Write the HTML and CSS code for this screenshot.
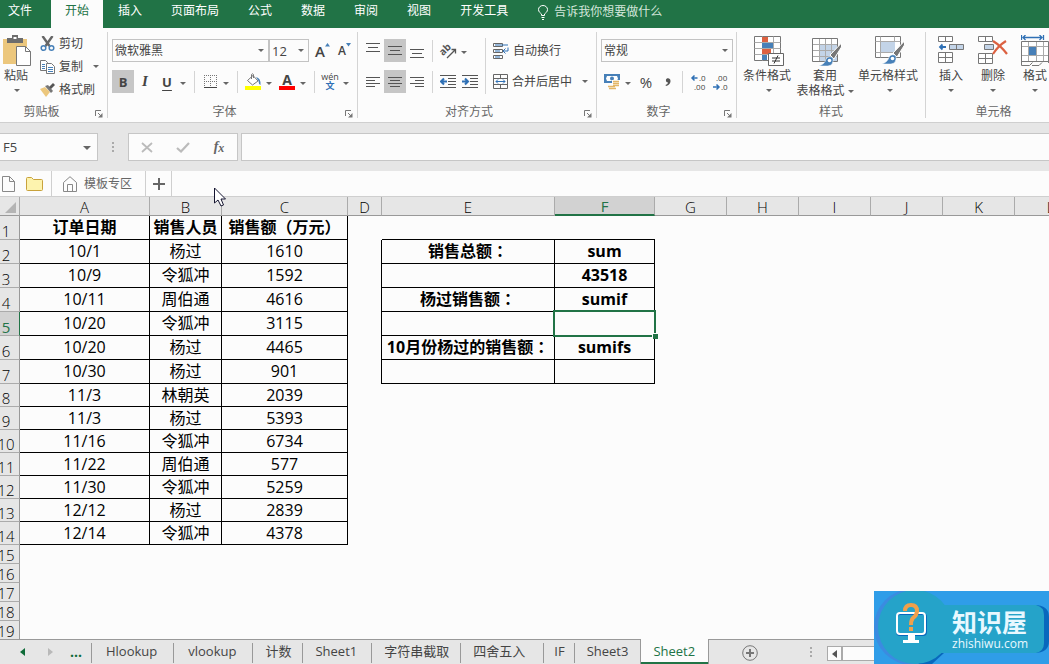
FILE: index.html
```html
<!DOCTYPE html>
<html lang="zh-CN">
<head>
<meta charset="utf-8">
<title>Sheet2</title>
<link rel="stylesheet" href="styles.css">
</head>
<body>
<nav class="menu">
  <button class="menu-tab file">文件</button>
  <button class="menu-tab active">开始</button>
  <button class="menu-tab">插入</button>
  <button class="menu-tab">页面布局</button>
  <button class="menu-tab">公式</button>
  <button class="menu-tab">数据</button>
  <button class="menu-tab">审阅</button>
  <button class="menu-tab">视图</button>
  <button class="menu-tab">开发工具</button>
  <button class="tell">
    <svg width="10" height="15" viewBox="0 0 10 15" fill="none" stroke="#fff"><path d="M3.5 10.5V9C2.500 8 .5 7 .5 4.500a4.500 4 0 0 1 9 0C9.500 7 7.500 8 6.500 9v1.500zM3.500 12.500h3M4 14.500h2"/></svg>
    <span>告诉我你想要做什么</span>
  </button>
</nav>

<section class="ribbon">
  <div class="group clipboard">
    <div class="group-body">
      <button class="big paste">
        <svg width="30" height="32" viewBox="0 0 30 32"><path d="M1 4h24v25H1z" fill="#ecc77d"/><path d="M5 3h5V0h6v3h5v5H5z" fill="#6d6d6d"/><path d="M11.500 2h3v2h-3z" fill="#fff"/><path d="M14.500 11.500h9l5 5v14h-14z" fill="#fff" stroke="#777"/><path d="M23.500 11.500v5h5" fill="none" stroke="#777"/></svg>
        <span>粘贴</span><i class="caret"></i>
      </button>
      <div class="clip-list">
        <button class="line"><svg width="14" height="16" viewBox="0 0 14 16" fill="none"><path d="M2 0l7 10M12 0L5 10" stroke="#666" stroke-width="2.400"/><circle cx="3" cy="12" r="2.300" stroke="#4780b8" stroke-width="1.500"/><circle cx="11" cy="12" r="2.300" stroke="#4780b8" stroke-width="1.500"/></svg><span>剪切</span></button>
        <button class="line"><svg width="15" height="14" viewBox="0 0 15 14"><path d="M.5.5h5l2 2v8h-7z" fill="#fff" stroke="#777"/><path d="M2 4.500h3M2 6.500h3M2 8.500h3" stroke="#4780b8"/><path d="M6.500 3.500h5l3 3v7h-8z" fill="#fff" stroke="#777"/><path d="M8 7.500h5M8 9.500h5M8 11.500h5" stroke="#4780b8"/></svg><span>复制</span><i class="caret"></i></button>
        <button class="line"><svg width="15" height="14" viewBox="0 0 15 14"><path d="M0 6l5-2 5 5-4 5z" fill="#ecc77d"/><path d="M5 3l3-1 5 6-2 2z" fill="#777"/><path d="M9 4l4-4 2 2-4 4z" fill="#555"/></svg><span>格式刷</span></button>
      </div>
    </div>
    <div class="group-label">剪贴板<button class="launcher" aria-label="剪贴板"><svg width="8" height="8" viewBox="0 0 8 8"><path d="M.5 6V.5H6M3 3l3.500 3.500" fill="none" stroke="#777"/><path d="M7.500 3v4.500H3z" fill="#777"/></svg></button></div>
  </div>

  <div class="group font">
    <div class="group-body rows">
      <div class="row">
        <label class="combo family"><select aria-label="字体"><option>微软雅黑</option></select><i class="caret"></i></label>
        <label class="combo size"><select aria-label="字号"><option>12</option></select><i class="caret"></i></label>
        <button class="grow" aria-label="增大字号"><span>A</span><svg width="5" height="4" viewBox="0 0 5 4"><path d="M0 3.500L2.500 0 5 3.500z" fill="#4780b8"/></svg></button>
        <button class="grow shrink" aria-label="减小字号"><span>A</span><svg width="5" height="4" viewBox="0 0 5 4"><path d="M0 0h5L2.500 3.500z" fill="#4780b8"/></svg></button>
      </div>
      <div class="row">
        <button class="tool on bold">B</button><button class="tool italic">I</button><button class="tool under">U</button><button class="drop" aria-label="下划线"><i class="caret"></i></button>
        <i class="sep"></i>
        <button class="tool" aria-label="边框"><svg width="13" height="14" viewBox="0 0 13 14" fill="none" stroke="#777"><path d="M.5 0v12M6.500 0v12M12.500 0v12M0 .5h13M0 6.500h13" stroke-dasharray="1 1"/><path d="M0 12.500h13" stroke="#444" /></svg></button><button class="drop" aria-label="边框选项"><i class="caret"></i></button>
        <i class="sep"></i>
        <button class="tool" aria-label="填充颜色"><svg width="16" height="17" viewBox="0 0 16 17"><path d="M2.500 7.500L8 2.500l5 5.500-5.500 4z" fill="#fff" stroke="#777"/><path d="M6.500 6V1.500Q7.500 0 8.500 1.500V5" fill="none" stroke="#777"/><path d="M11 4q5 1 4.500 8-2-1-2-4z" fill="#4780b8"/><path d="M0 13h16v4H0z" fill="#ff0"/></svg></button><button class="drop" aria-label="填充选项"><i class="caret"></i></button>
        <button class="tool ink" aria-label="字体颜色"><span>A</span></button><button class="drop" aria-label="颜色选项"><i class="caret"></i></button>
        <i class="sep"></i>
        <button class="tool phonetic"><span>wén</span><b>文</b></button><button class="drop" aria-label="拼音选项"><i class="caret"></i></button>
      </div>
    </div>
    <div class="group-label">字体<button class="launcher" aria-label="字体设置"><svg width="8" height="8" viewBox="0 0 8 8"><path d="M.5 6V.5H6M3 3l3.500 3.500" fill="none" stroke="#777"/><path d="M7.500 3v4.500H3z" fill="#777"/></svg></button></div>
  </div>

  <div class="group align">
    <div class="group-body">
      <div class="rows">
        <div class="row">
          <button class="tool" aria-label="顶端对齐"><svg width="14" height="16" viewBox="0 0 14 16" stroke="#555"><path d="M0 .5h14M2 4.500h10M0 8.500h14"/></svg></button><button class="tool on" aria-label="垂直居中"><svg width="14" height="14" viewBox="0 0 14 14" stroke="#555"><path d="M0 2.500h14M2 6.500h10M0 10.500h14"/></svg></button><button class="tool" aria-label="底端对齐"><svg width="14" height="14" viewBox="0 0 14 14" stroke="#555"><path d="M0 5.500h14M2 9.500h10M0 13.500h14"/></svg></button>
          <i class="sep"></i>
          <button class="tool" aria-label="方向"><svg width="18" height="18" viewBox="0 0 18 18"><text x="0" y="11" class="ab" transform="rotate(-45 6 8)">ab</text><path d="M8 16L16 8M12.500 7.500h4v4" fill="none" stroke="#555" stroke-width="1.300"/></svg></button><button class="drop" aria-label="方向选项"><i class="caret"></i></button>
        </div>
        <div class="row">
          <button class="tool" aria-label="左对齐"><svg width="14" height="12" viewBox="0 0 14 12" stroke="#555"><path d="M0 1.500h14M0 4.500h9M0 7.500h14M0 10.500h9"/></svg></button><button class="tool on" aria-label="居中"><svg width="14" height="12" viewBox="0 0 14 12" stroke="#555"><path d="M0 1.500h14M2 4.500h10M0 7.500h14M2 10.500h10"/></svg></button><button class="tool" aria-label="右对齐"><svg width="14" height="12" viewBox="0 0 14 12" stroke="#555"><path d="M0 1.500h14M5 4.500h9M0 7.500h14M5 10.500h9"/></svg></button>
          <i class="sep"></i>
          <button class="tool" aria-label="减少缩进"><svg width="16" height="14" viewBox="0 0 16 14"><path d="M0 .5h16M8 3.500h8M8 6.500h8M8 9.500h8M0 12.500h16" stroke="#555"/><path d="M7 6.500H2M4 3.500l-3 3 3 3" fill="none" stroke="#2f70b5" stroke-width="2"/></svg></button><button class="tool" aria-label="增加缩进"><svg width="16" height="14" viewBox="0 0 16 14"><path d="M0 .5h16M8 3.500h8M8 6.500h8M8 9.500h8M0 12.500h16" stroke="#555"/><path d="M0 6.500h5M3 3.500l3 3-3 3" fill="none" stroke="#2f70b5" stroke-width="2"/></svg></button>
        </div>
      </div>
      <i class="sep tall"></i>
      <div class="rows">
        <button class="row wrap"><svg width="16" height="16" viewBox="0 0 16 16" fill="none"><path d="M.5.5h9v3h-9zM.5 6.500h9v3h-9zM.5 15.500v-3h9v3z" stroke="#666"/><path d="M2 2h13M2 8h5M2 14h5M15 4.500v3.500h-5M12.500 5.500L10 8l2.500 2.500" stroke="#2f70b5"/></svg><span>自动换行</span></button>
        <button class="row wrap"><svg width="15" height="15" viewBox="0 0 15 15" fill="none"><path d="M.5.5h14v14H.5zM.5 4.500h14M.5 10.500h14M7.500.5v4M7.500 10.500v4" stroke="#666"/><path d="M3 7.500h9M5 5.500l-2 2 2 2M10 5.500l2 2-2 2" stroke="#2f70b5"/></svg><span>合并后居中</span><i class="caret"></i></button>
      </div>
    </div>
    <div class="group-label">对齐方式<button class="launcher" aria-label="对齐设置"><svg width="8" height="8" viewBox="0 0 8 8"><path d="M.5 6V.5H6M3 3l3.500 3.500" fill="none" stroke="#777"/><path d="M7.500 3v4.500H3z" fill="#777"/></svg></button></div>
  </div>

  <div class="group number">
    <div class="group-body rows">
      <div class="row"><label class="combo format"><select aria-label="数字格式"><option>常规</option></select><i class="caret"></i></label></div>
      <div class="row">
        <button class="tool" aria-label="会计格式"><svg width="16" height="16" viewBox="0 0 16 16"><path d="M0 0h16v9H0z" fill="#4780b8"/><path d="M3 2h10l1 2.500L13 7H3L2 4.500z" fill="#fff"/><circle cx="8" cy="4.500" r="2" fill="#4780b8"/><path d="M8 6h8v10H8z" fill="#fff"/><path d="M9 7.500h6M9 9.500h6M9 11.500h6M4 12.500h7M5 14.500h7" stroke="#e3b768" stroke-width="1.500"/></svg></button><button class="drop" aria-label="会计选项"><i class="caret"></i></button>
        <button class="tool percent">%</button>
        <button class="tool" aria-label="千位分隔"><svg width="6" height="8" viewBox="0 0 6 8"><path d="M1 1.500C2-.5 5.500-.2 5.500 3S3 7.500 1 8l-.5-1Q3 6 3 4.500Q.5 4.500 1 1.500z" fill="#555"/></svg></button>
        <i class="sep"></i>
        <button class="tool decimal" aria-label="增加小数位"><svg width="18" height="20" viewBox="0 0 18 20"><path d="M7.500 6H2.500M4.500 3.500L2 6l2.500 2.500" fill="none" stroke="#2f70b5" stroke-width="1.500"/><text x="9" y="9">.0</text><text x="4" y="18">.00</text></svg></button><button class="tool decimal" aria-label="减少小数位"><svg width="18" height="20" viewBox="0 0 18 20"><text x="4" y="9">.00</text><path d="M1 15h6M4.500 12.500L7 15l-2.500 2.500" fill="none" stroke="#2f70b5" stroke-width="1.500"/><text x="9" y="18">.0</text></svg></button>
      </div>
    </div>
    <div class="group-label">数字<button class="launcher" aria-label="数字设置"><svg width="8" height="8" viewBox="0 0 8 8"><path d="M.5 6V.5H6M3 3l3.500 3.500" fill="none" stroke="#777"/><path d="M7.500 3v4.500H3z" fill="#777"/></svg></button></div>
  </div>

  <div class="group styles">
    <div class="group-body">
      <button class="big cond"><svg width="30" height="32" viewBox="0 0 30 32"><path d="M.5 1.500h26v24H.5z" fill="#fff" stroke="#777"/><path d="M.5 7.500h26M.5 13.500h26M.5 19.500h26M8.500 1.500v24M19.500 1.500v24" stroke="#aaa"/><path d="M8 2h6v5H8zM8 14h9v5H8z" fill="#dc6141"/><path d="M8 8h11v5H8zM8 20h5v5H8z" fill="#4780b8"/><path d="M14.500 18.500h15v12h-15z" fill="#fff" stroke="#666"/><path d="M18 23h8M18 26h8M24 20.500l-4 8" stroke="#333"/></svg><span>条件格式</span><i class="caret"></i></button>
      <button class="big tablefmt"><svg width="30" height="32" viewBox="0 0 30 32"><path d="M.5 3.500h25v23H.5z" fill="#fff"/><path d="M7 10h18v16H7z" fill="#c3d4e8"/><path d="M.5 9.500h25M.5 15.500h25M.5 21.500h25M7.500 3.500v23M13.500 3.500v23M19.500 3.500v23" stroke="#aaa"/><path d="M.5 3.500h25v23H.5z" fill="none" stroke="#777"/><path d="M29.500 8L18 20l4 4 7.500-12z" fill="#777" stroke="#fff"/><path d="M7 31q6-2 7-7 3-4 7-1 1 7-5 8z" fill="#4780b8" stroke="#fff" stroke-width=".5"/><circle cx="17.500" cy="25.500" r="1.800" fill="#fff"/></svg><span>套用<br>表格格式 <i class="caret"></i></span></button>
      <button class="big cellstyle"><svg width="30" height="32" viewBox="0 0 30 32"><path d="M.5 1.500h25v21H.5z" fill="#fff" stroke="#777"/><path d="M.5 6.500h25M.5 17.500h25M5.500 1.500v21M19.500 1.500v21" stroke="#aaa"/><path d="M6 7h14v10H6z" fill="#c3d4e8"/><path d="M29.500 6L18 18l4 4 7.500-12z" fill="#777" stroke="#fff"/><path d="M7 29q6-2 7-7 3-4 7-1 1 7-5 8z" fill="#4780b8" stroke="#fff" stroke-width=".5"/><circle cx="17.500" cy="23.500" r="1.800" fill="#fff"/></svg><span>单元格样式</span><i class="caret"></i></button>
    </div>
    <div class="group-label">样式</div>
  </div>

  <div class="group cells">
    <div class="group-body">
      <button class="big"><svg width="28" height="32" viewBox="0 0 28 32"><path d="M1.500 1.500h14v5h-14zM8.500 1.500v5M1.500 17.500h14v10h-14zM8.500 17.500v10M1.500 22.500h14" fill="#fff" stroke="#777"/><path d="M12.500 9.500h14v5h-14z" fill="#c3d4e8" stroke="#777"/><path d="M19.500 9.500v5" stroke="#777"/><path d="M9 12H3M5.500 9.500L3 12l2.500 2.500" fill="none" stroke="#2f70b5" stroke-width="1.800"/></svg><span>插入</span><i class="caret"></i></button>
      <button class="big"><svg width="30" height="32" viewBox="0 0 30 32"><path d="M.5 1.500h14v5H.5zM7.500 1.500v5M.5 18.500h14v10H.5zM7.500 18.500v10M.5 23.500h14" fill="#fff" stroke="#777"/><path d="M6.500 9.500h9v5h-9z" fill="#c3d4e8" stroke="#777"/><path d="M15 6q8 5 14 13M28 6q-8 5-13 13" fill="none" stroke="#dc6141" stroke-width="2.200"/></svg><span>删除</span><i class="caret"></i></button>
      <button class="big"><svg width="28" height="32" viewBox="0 0 28 32"><path d="M.5 0v5M22.500 0v5M2 2.500h19M4.500 0L2 2.500 4.500 5M18.500 0L21 2.500 18.500 5" fill="none" stroke="#2f70b5" stroke-width="1.300"/><path d="M.5 6.500h27v20H.5z" fill="#fff"/><path d="M.5 11.500h27M.5 20.500h27M7.500 6.500v20M15.500 6.500v20M22.500 6.500v20" stroke="#aaa"/><path d="M.5 6.500h27v20H.5z" fill="none" stroke="#777"/><path d="M8 12h7v8H8z" fill="#4780b8"/><path d="M.5 26v4.500h8l3-3M11 30.500h7l3-3M27.500 26v2" fill="none" stroke="#777"/></svg><span>格式</span><i class="caret"></i></button>
    </div>
    <div class="group-label">单元格</div>
  </div>
</section>

<section class="formula">
  <div class="name-box"><input type="text" value="F5" aria-label="名称框"><button aria-label="名称列表"><i class="caret"></i></button></div>
  <i class="dots"></i>
  <div class="formula-tools">
    <button aria-label="取消"><svg width="12" height="11" viewBox="0 0 12 11"><path d="M1 1l10 9M11 1L1 10" stroke="#bbb" stroke-width="1.800"/></svg></button>
    <button aria-label="输入"><svg width="14" height="11" viewBox="0 0 14 11"><path d="M1 6l4 3.500L13 1" fill="none" stroke="#bbb" stroke-width="2.200"/></svg></button>
    <button class="fx">f<small>x</small></button>
  </div>
  <input class="formula-input" type="text" aria-label="编辑栏">
</section>

<nav class="docs">
  <button class="doc new" aria-label="新建"><svg width="13" height="16" viewBox="0 0 13 16" fill="none" stroke="#888"><path d="M.5.5h7l5 5v10H.5zM7.500.5v5h5"/></svg></button>
  <button class="doc open" aria-label="打开"><svg width="17" height="14" viewBox="0 0 17 14"><path d="M.5 1.500Q.5.5 1.500.5h4l2 2h8q1 0 1 1v9q0 1-1 1h-14q-1 0-1-1z" fill="#fdf3ae" stroke="#c8a23c"/></svg></button>
  <button class="doc home"><svg width="14" height="16" viewBox="0 0 14 16" fill="none" stroke="#888"><path d="M.5 15.500v-9L7 .7l6.500 5.800v9zM4.500 15.500v-7h5v7"/></svg><span>模板专区</span></button>
  <button class="doc add" aria-label="新标签"><svg width="12" height="12" viewBox="0 0 12 12"><path d="M6 0v12M0 6h12" stroke="#666" stroke-width="2"/></svg></button>
</nav>

<main class="sheet">
  <table>
    <colgroup><col class="c-head"><col class="c-a"><col class="c-b"><col class="c-c"><col class="c-d"><col class="c-e"><col class="c-f"><col class="c-n"><col class="c-n"><col class="c-n"><col class="c-n"><col class="c-n"><col class="c-n"></colgroup>
    <thead><tr><th class="corner"><svg width="11" height="11" viewBox="0 0 11 11"><path d="M11 0v11H0z" fill="#b4b4b4"/></svg></th><th>A</th><th>B</th><th>C</th><th>D</th><th>E</th><th class="current">F</th><th>G</th><th>H</th><th>I</th><th>J</th><th>K</th><th>L</th></tr></thead>
    <tbody class="tall-rows">
      <tr class="titles"><th>1</th><td class="box">订单日期</td><td class="box">销售人员</td><td class="box">销售额<span class="punct" lang="zh-TW">（</span>万元<span class="punct" lang="zh-TW">）</span></td><td></td><td class="under-line"></td><td class="under-line"></td><td colspan="6"></td></tr>
      <tr><th>2</th><td class="box">10/1</td><td class="box">杨过</td><td class="box">1610</td><td class="edge"></td><td class="box strong">销售总额<span class="punct" lang="zh-TW">：</span></td><td class="box strong">sum</td><td colspan="6"></td></tr>
      <tr><th>3</th><td class="box">10/9</td><td class="box">令狐冲</td><td class="box">1592</td><td class="edge"></td><td class="box"></td><td class="box strong">43518</td><td colspan="6"></td></tr>
      <tr><th>4</th><td class="box">10/11</td><td class="box">周伯通</td><td class="box">4616</td><td class="edge"></td><td class="box strong">杨过销售额<span class="punct" lang="zh-TW">：</span></td><td class="box strong">sumif</td><td colspan="6"></td></tr>
      <tr><th class="current">5</th><td class="box">10/20</td><td class="box">令狐冲</td><td class="box">3115</td><td class="edge"></td><td class="box"></td><td class="box selected"><i class="handle"></i></td><td colspan="6"></td></tr>
      <tr><th>6</th><td class="box">10/20</td><td class="box">杨过</td><td class="box">4465</td><td class="edge"></td><td class="box strong">10月份杨过的销售额<span class="punct" lang="zh-TW">：</span></td><td class="box strong">sumifs</td><td colspan="6"></td></tr>
      <tr><th>7</th><td class="box">10/30</td><td class="box">杨过</td><td class="box">901</td><td class="edge"></td><td class="box"></td><td class="box"></td><td colspan="6"></td></tr>
    </tbody>
    <tbody class="mid-rows">
      <tr><th>8</th><td class="box">11/3</td><td class="box">林朝英</td><td class="box">2039</td><td colspan="9"></td></tr>
      <tr><th>9</th><td class="box">11/3</td><td class="box">杨过</td><td class="box">5393</td><td colspan="9"></td></tr>
      <tr><th>10</th><td class="box">11/16</td><td class="box">令狐冲</td><td class="box">6734</td><td colspan="9"></td></tr>
      <tr><th>11</th><td class="box">11/22</td><td class="box">周伯通</td><td class="box">577</td><td colspan="9"></td></tr>
      <tr><th>12</th><td class="box">11/30</td><td class="box">令狐冲</td><td class="box">5259</td><td colspan="9"></td></tr>
      <tr><th>13</th><td class="box">12/12</td><td class="box">杨过</td><td class="box">2839</td><td colspan="9"></td></tr>
      <tr><th>14</th><td class="box">12/14</td><td class="box">令狐冲</td><td class="box">4378</td><td colspan="9"></td></tr>
    </tbody>
    <tbody class="short-rows">
      <tr><th>15</th><td colspan="12"></td></tr>
      <tr><th>16</th><td colspan="12"></td></tr>
      <tr><th>17</th><td colspan="12"></td></tr>
      <tr><th>18</th><td colspan="12"></td></tr>
      <tr><th>19</th><td colspan="12"></td></tr>
    </tbody>
  </table>
</main>

<footer class="sheets">
  <div class="sheet-nav">
    <button aria-label="上一个"><svg width="5" height="8" viewBox="0 0 5 8"><path d="M5 0v8L0 4z" fill="#0e6b38"/></svg></button>
    <button aria-label="下一个"><svg width="5" height="8" viewBox="0 0 5 8"><path d="M0 0v8l5-4z" fill="#b9b9b9"/></svg></button>
    <button class="more">...</button>
  </div>
  <button class="sheet-tab wide">Hlookup</button>
  <button class="sheet-tab wide">vlookup</button>
  <button class="sheet-tab">计数</button>
  <button class="sheet-tab medium">Sheet1</button>
  <button class="sheet-tab">字符串截取</button>
  <button class="sheet-tab roomy">四舍五入</button>
  <button class="sheet-tab narrow">IF</button>
  <button class="sheet-tab last">Sheet3</button>
  <button class="sheet-tab active">Sheet2</button>
  <div class="sheet-end">
    <button class="add-sheet" aria-label="新工作表"><svg width="16" height="16" viewBox="0 0 16 16" fill="none" stroke="#777"><circle cx="8" cy="8" r="7.300"/><path d="M8 4v8M4 8h8" stroke-width="2"/></svg></button>
    <i class="dots"></i>
    <button class="scroll-left" aria-label="向左滚动"><svg width="5" height="8" viewBox="0 0 5 8"><path d="M5 0v8L0 4z" fill="#555"/></svg></button>
    <div class="track"></div>
  </div>
</footer>

<aside class="brand">
  <svg class="brand-art" width="175" height="73" viewBox="0 0 175 73">
    <path d="M0 0h175v73H0z" fill="#2f9de8"/>
    <circle cx="38" cy="36" r="38" fill="#3b8be0"/>
    <path d="M38 0q20 1 32 14l-5 4-27-14zM70 62L58 73H44l14-11zM160 14q15 0 15 12v24q0 12-15 12z" fill="#0868bd"/>
    <circle cx="41" cy="36" r="37" fill="#25a3c9"/>
    <path d="M50 14h112q8 2 8 10v28q0 8-8 10H50z" fill="#25a3c9"/>
    <rect x="23" y="23" width="29" height="21" rx="3" fill="none" stroke="#0868bd" stroke-width="2"/>
    <rect x="23" y="22" width="28" height="21" rx="3" fill="none" stroke="#fff" stroke-width="2"/>
    <path d="M34 43h7v6h4v3H29v-3h5z" fill="#fff"/>
    <path d="M31 20q0-6 6-6t6 6q0 4-4 7-2 2-2 7" fill="none" stroke="#f0a04b" stroke-width="4"/><path d="M35 36h4v4h-4z" fill="#f0a04b"/>
  </svg>
  <div class="brand-text"><strong>知识屋</strong><span>zhishiwu.com</span></div>
</aside>
<svg class="pointer" width="13" height="20" viewBox="0 0 13 20"><path d="M.5 1v15l3.500-3 3 6 2.500-1-2.500-6h4.500z" fill="#fff" stroke="#151530"/></svg>
</body>
</html>
```
FILE: styles.css
```css
* { box-sizing: border-box; }

html, body { height: 100%; margin: 0; }

body {
  display: flex;
  flex-direction: column;
  overflow: hidden;
  position: relative;
  background: #fcfcfc;
  color: #444;
  font: 12px/16px "Open Sans", "Noto Sans CJK SC", sans-serif;
}

button, input, select {
  margin: 0;
  padding: 0;
  border: 0;
  border-radius: 0;
  background: none;
  color: inherit;
  font: inherit;
  white-space: nowrap;
}

svg { display: block; flex: none; }

.caret {
  display: inline-block;
  flex: none;
  border: 3px solid transparent;
  border-top-color: #666;
  border-bottom: 0;
}

/* Menu */
.menu {
  flex: none;
  display: flex;
  gap: 1px;
  height: 28px;
  background: #217346;
  color: #fff;
}
.menu-tab { padding: 0 14px 6px; }
.menu-tab.file { padding: 0 18px 6px 8px; }
.menu-tab.active { background: #fcfcfc; color: #217346; }
.tell {
  display: flex;
  align-items: center;
  gap: 6px;
  margin-left: 15px;
  padding-bottom: 4px;
  color: #d3e6db;
}

/* Ribbon */
.ribbon {
  flex: none;
  display: flex;
  height: 95px;
  padding: 4px 0;
  border-bottom: 1px solid #cfcfcf;
  overflow: hidden;
}
.group {
  flex: none;
  display: flex;
  flex-direction: column;
  border-right: 1px solid #d4d4d4;
}
.group-body { display: flex; flex: none; height: 70px; }
.group-label {
  position: relative;
  flex: none;
  height: 16px;
  line-height: 20px;
  padding-right: 24px;
  color: #666;
  text-align: center;
}
.launcher { position: absolute; right: 4px; bottom: 0; line-height: 8px; }
.rows { display: flex; flex-direction: column; gap: 8px; padding-top: 7px; }
.row { display: flex; align-items: center; height: 23px; }

.clipboard { width: 108px; }
.font { width: 250px; padding-left: 4px; }
.align { width: 239px; padding-left: 4px; }
.number { width: 140px; padding-left: 4px; }
.styles { width: 189px; padding-left: 2px; }
.cells { flex: 1 0 134px; padding-left: 4px; }
.font .group-label { padding-right: 20px; }
.align .group-label { padding-right: 20px; }
.number .group-label { padding-right: 20px; }
.styles .group-label, .cells .group-label { padding-right: 2px; }

.big {
  display: flex;
  flex-direction: column;
  align-items: center;
  width: 42px;
  padding-top: 3px;
  line-height: 15px;
}
.big span { padding-top: 1px; }
.big > .caret { margin-top: 6px; }
.paste { width: 38px; padding-right: 4px; }
.paste > span { padding-right: 2px; }
.cond { width: 56px; }
.tablefmt { width: 60px; }
.cellstyle { width: 66px; }
.styles .big > svg, .styles .big > .caret { margin-left: 3px; }
.tablefmt .caret { vertical-align: middle; }

.clip-list { display: flex; flex-direction: column; padding-left: 2px; }
.line { display: flex; align-items: center; gap: 4px; height: 23px; }
.line svg { width: 15px; }
.line .caret { margin-left: 6px; }

.combo {
  position: relative;
  display: flex;
  align-items: center;
  height: 23px;
  border: 1px solid #c3c3c3;
}
.combo select { flex: 1; height: 21px; padding-left: 2px; appearance: none; outline: 0; }
.combo .caret { position: absolute; right: 4px; }
.family { width: 157px; }
.size { width: 40px; }
.size select { font-size: 13px; }
.format { width: 132px; }

.grow { display: flex; width: 22px; padding-left: 6px; font-weight: 600; font-size: 15px; }
.shrink { margin-left: 1px; font-size: 12px; }

.tool {
  display: flex;
  align-items: center;
  justify-content: center;
  flex: none;
  width: 22px;
  height: 23px;
}
.tool.on { background: #c6c6c6; }
.drop { width: 10px; height: 23px; padding-bottom: 2px; line-height: 10px; }
.bold { font-weight: 700; font-size: 13px; }
.italic { font: italic bold 15px "Liberation Serif", serif; }
.under { font-weight: 700; font-size: 13px; text-decoration: underline; text-underline-offset: 3px; }
.sep { flex: none; width: 1px; height: 22px; margin: 0 4px 0 6px; background: #d4d4d4; }
.sep.tall { height: 56px; margin: 6px 7px 0 0; }
.drop + .tool { margin-left: 2px; }
.ink span { width: 16px; height: 17px; border-bottom: 4px solid #f00; font-size: 14px; font-weight: 700; line-height: 13px; }
.phonetic { flex-direction: column; font-size: 9px; line-height: 9px; }
.phonetic b { color: #2f70b5; line-height: 10px; }
.ab { font: bold 10px "Open Sans", sans-serif; fill: #555; }
.percent { font-size: 15px; }
.decimal text { font: 8px "Open Sans", sans-serif; fill: #444; }

.align .rows:first-child { width: 123px; }
.align .rows:first-child .sep { margin: 0 4px; }
.number .sep { margin: 0 5px 0 3px; }
.wrap { gap: 4px; }
.wrap .caret { margin-left: 6px; }

/* Formula bar */
.formula {
  flex: none;
  display: flex;
  align-items: stretch;
  height: 48px;
  padding: 10px 0;
  background: #e6e6e6;
}
.name-box {
  display: flex;
  width: 98px;
  border: 1px solid #c6c6c6;
  border-left: 0;
  background: #fcfcfc;
}
.name-box input { flex: 1; width: 60px; padding-left: 3px; outline: 0; font-size: 13px; }
.name-box button { width: 20px; padding-bottom: 3px; line-height: 12px; }
.name-box .caret { border-width: 4px 4px 0; }
.dots {
  flex: none;
  width: 2px;
  height: 10px;
  background: repeating-linear-gradient(#aaa 0 2px, transparent 2px 4px);
}
.formula .dots { align-self: center; margin: 0 14px; }
.formula-tools {
  display: flex;
  width: 110px;
  margin-right: 3px;
  border: 1px solid #c6c6c6;
  background: #fcfcfc;
}
.formula-tools button { flex: 1; display: flex; align-items: center; justify-content: center; }
.formula-tools .fx { font: italic bold 14px "Liberation Serif", serif; color: #666; }
.fx small { font-size: 12px; padding-top: 2px; }
.formula-input { flex: 1; border: 1px solid #c6c6c6; border-right: 0; background: #fcfcfc; outline: 0; }

/* Document tabs */
.docs { flex: none; display: flex; height: 26px; border-bottom: 1px solid #cfcfcf; color: #666; }
.doc { display: flex; align-items: center; justify-content: center; gap: 7px; }
.new { width: 17px; }
.open { width: 35px; border-right: 1px solid #cfcfcf; }
.home { width: 94px; padding-right: 2px; border-right: 1px solid #cfcfcf; }
.add { width: 26px; border-right: 1px solid #cfcfcf; }

/* Grid: the first column is partly scrolled under the window edge */
.sheet { flex: 1; min-height: 0; overflow: hidden; }
table {
  width: 100%;
  margin-left: -7px;
  table-layout: fixed;
  border-collapse: separate;
  border-spacing: 0;
  color: #000;
  font-size: 16px;
  line-height: 18px;
  text-align: center;
}
.c-head { width: 27px; }
.c-a { width: 130px; }
.c-b { width: 72px; }
.c-c { width: 126px; }
.c-d { width: 34px; }
.c-e { width: 173px; }
.c-f { width: 100px; }
.c-n { width: 72px; }
th, td { padding: 0; white-space: nowrap; }
th {
  border-right: 1px solid #ababab;
  border-bottom: 1px solid #ababab;
  background: #e6e6e6;
  font-weight: 300;
  font-size: 15px;
}
thead th { height: 19px; padding-top: 2px; line-height: 15px; border-bottom-color: #999; }
.corner svg { margin-left: 12px; }
tbody th { vertical-align: bottom; line-height: 16px; border-right-color: #999; }
.tall-rows tr { height: 24px; }
.mid-rows tr { height: 23px; }
.short-rows tr { height: 19px; }
.box { border-right: 1px solid #000; border-bottom: 1px solid #000; }
.edge { border-right: 1px solid #000; }
.under-line { border-bottom: 1px solid #000; }
.tall-rows .box { padding-bottom: 1px; }
.titles td, .strong { font-weight: 700; }
.punct { font-family: "Noto Sans CJK TC", sans-serif; line-height: 16px; }
th.current { background: #d2d2d2; color: #217346; font-weight: 400; }
thead .current { border-bottom: 2px solid #217346; }
tbody .current { border-right-color: #217346; }
.selected { position: relative; }
.selected::after { content: ""; position: absolute; inset: -2px; border: 2px solid #217346; }
.handle {
  position: absolute;
  right: -4px;
  bottom: -4px;
  z-index: 1;
  width: 6px;
  height: 6px;
  border: solid #fcfcfc;
  border-width: 1px 0 0 1px;
  background: #217346;
}

/* Sheet tabs */
.sheets {
  flex: none;
  display: flex;
  height: 25px;
  background: #e6e6e6;
  font-size: 13px;
}
.sheets > * { border-top: 1px solid #999; }
.sheet-nav { display: flex; align-items: center; width: 92px; }
.sheet-nav button { display: flex; flex: none; justify-content: center; width: 16px; }
.sheet-nav button:first-child { width: 40px; }
.sheet-nav .more { width: 42px; color: #0e6b38; font-weight: 700; font-size: 14px; }
.sheet-nav button:nth-child(2) { margin: 0 -3px 0 0; }
.sheet-tab {
  padding: 0 12px 2px;
  position: relative;
}
.sheet-tab::before { content: ""; position: absolute; left: -1px; top: 3px; bottom: 1px; width: 1px; background: #999; }
.wide { padding: 0 17px 2px 14px; }
.medium { padding: 0 15px 2px 12px; }
.roomy { padding: 0 19px 2px 12px; }
.narrow { padding: 0 10px 2px; }
.last { border-right: 1px solid #999; }
.sheets .sheet-tab.active {
  padding: 0 13px 0 12px;
  border-top: 0;
  border-bottom: 2px solid #217346;
  background: #fcfcfc;
  color: #217346;
}
.sheet-tab.active::before { display: none; }
.sheet-nav { padding-left: 2px; }
.sheet-end {
  flex: 1;
  display: flex;
  align-items: center;
  border-left: 1px solid #999;
}
.add-sheet { margin: 2px 52px 0 33px; }
.scroll-left { display: flex; align-items: center; justify-content: center; width: 15px; height: 15px; margin-top: 3px; margin-left: 15px; border: 1px solid #aaa; background: #fcfcfc; }
.track { flex: 1; height: 15px; margin-top: 3px; border: 1px solid #aaa; background: #fcfcfc; }

/* Overlays */
.brand { position: absolute; right: 0; bottom: 0; width: 175px; height: 73px; }
.brand-text {
  position: absolute;
  left: 78px;
  top: 17px;
  display: flex;
  flex-direction: column;
  gap: 3px;
  color: #e8f8ff;
  font: 12px/12px "Open Sans", sans-serif;
}
.brand-text strong { font: 700 25px/27px "Noto Sans CJK SC", sans-serif; }
.pointer { position: absolute; left: 214px; top: 187px; }
```
